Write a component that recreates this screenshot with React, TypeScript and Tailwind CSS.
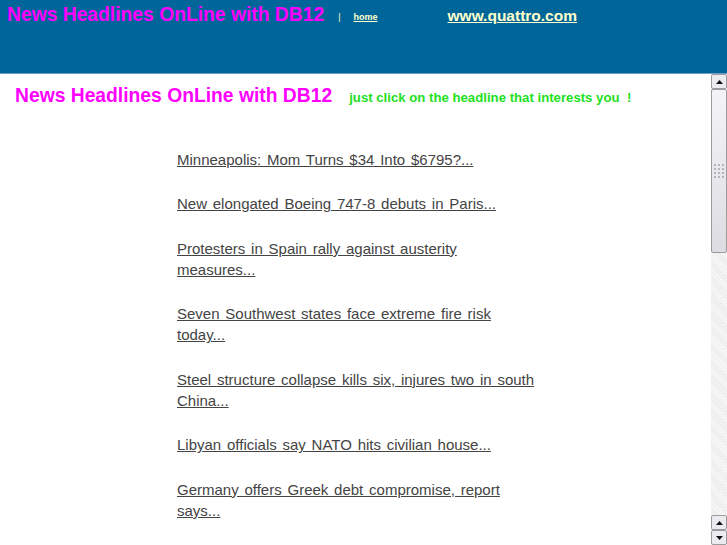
const headlines = [
  "Minneapolis: Mom Turns $34 Into $6795?...",
  "New elongated Boeing 747-8 debuts in Paris...",
  "Protesters in Spain rally against austerity measures...",
  "Seven Southwest states face extreme fire risk today...",
  "Steel structure collapse kills six, injures two in south China...",
  "Libyan officials say NATO hits civilian house...",
  "Germany offers Greek debt compromise, report says...",
];

function ArrowButton({ dir }: { dir: "up" | "down" }) {
  return (
    <div className="h-[15px] w-[16px] shrink-0 border border-[#9c9c9c] bg-[#ececf0] rounded-[2px] flex items-center justify-center">
      <svg width="7" height="4" viewBox="0 0 7 4">
        {dir === "up" ? (
          <polygon points="0,4 7,4 3.5,0" fill="#111" />
        ) : (
          <polygon points="0,0 7,0 3.5,4" fill="#111" />
        )}
      </svg>
    </div>
  );
}

function Scrollbar() {
  return (
    <div className="w-[16px] h-full flex flex-col bg-[#f3f3f3]">
      <ArrowButton dir="up" />
      <div className="h-[164px] shrink-0 border border-[#9c9c9c] bg-gradient-to-b from-[#f4f4f8] to-[#dcdce2] rounded-[2px] flex items-center justify-center">
        <div className="grid grid-cols-3 gap-[2px]">
          {Array.from({ length: 12 }).map((_, i) => (
            <div key={i} className="w-[2px] h-[2px] bg-[#b4b4bc]" />
          ))}
        </div>
      </div>
      <div className="flex-1 bg-[repeating-linear-gradient(45deg,#ececec_0px,#ececec_1px,#f8f8f8_1px,#f8f8f8_2px)]" />
      <ArrowButton dir="up" />
      <ArrowButton dir="down" />
    </div>
  );
}

export default function App() {
  return (
    <div className="w-[727px] h-[545px] overflow-hidden bg-white font-['Liberation_Sans',Arial,sans-serif]">
      <div className="h-[74px] bg-[#006699] border-b border-[#6b9dc6] flex items-start pl-[7px] pt-[4px]">
        <span className="text-[19.3px] leading-[22px] font-bold text-[#ff00ff]">
          News Headlines OnLine with DB12
        </span>
        <span className="ml-[14px] mt-[8px] text-[9px] leading-[10px] text-[#ffffcc]">|</span>
        <a href="#" className="ml-[13px] mt-[8px] text-[9px] leading-[11px] font-bold text-[#ffffcc] underline">
          home
        </a>
        <a href="#" className="ml-[70px] mt-[2px] text-[15.5px] leading-[20px] font-bold text-[#ffffcc] underline">
          www.quattro.com
        </a>
      </div>
      <div className="flex h-[471px]">
        <div className="flex-1 overflow-hidden">
          <div className="flex items-baseline pl-[15px] pt-[11px]">
            <span className="text-[19.3px] leading-[22px] font-bold text-[#ff00ff]">
              News Headlines OnLine with DB12
            </span>
            <span className="ml-[17px] text-[13.2px] font-bold text-[#22e022]">
              just click on the headline that interests you&nbsp; !
            </span>
          </div>
          <ul className="pl-[177px] pt-[41px] flex flex-col gap-[23.5px]">
            {headlines.map((h) => (
              <li key={h} className="w-[361px] text-[15px] leading-[21px] [word-spacing:1.6px] text-[#444]">
                <a href="#" className="underline">
                  {h}
                </a>
              </li>
            ))}
          </ul>
        </div>
        <Scrollbar />
      </div>
    </div>
  );
}
